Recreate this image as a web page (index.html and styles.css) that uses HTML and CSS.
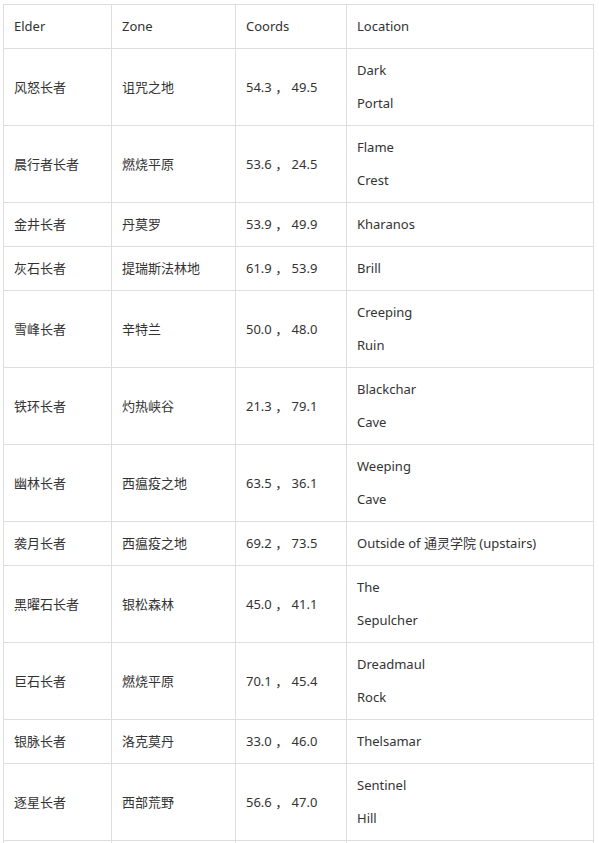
FILE: index.html
```html
<!DOCTYPE html>
<html>
<head>
<meta charset="utf-8">
<link rel="stylesheet" href="styles.css">
</head>
<body>
<table class="elders">
<colgroup>
<col class="c1"><col class="c2"><col class="c3"><col class="c4">
</colgroup>
<thead>
<tr><td>Elder</td><td>Zone</td><td>Coords</td><td>Location</td></tr>
</thead>
<tbody>
<tr><td>风怒长者</td><td>诅咒之地</td><td>54.3 ， 49.5</td><td>Dark<br>Portal</td></tr>
<tr><td>晨行者长者</td><td>燃烧平原</td><td>53.6 ， 24.5</td><td>Flame<br>Crest</td></tr>
<tr><td>金井长者</td><td>丹莫罗</td><td>53.9 ， 49.9</td><td>Kharanos</td></tr>
<tr><td>灰石长者</td><td>提瑞斯法林地</td><td>61.9 ， 53.9</td><td>Brill</td></tr>
<tr><td>雪峰长者</td><td>辛特兰</td><td>50.0 ， 48.0</td><td>Creeping<br>Ruin</td></tr>
<tr><td>铁环长者</td><td>灼热峡谷</td><td>21.3 ， 79.1</td><td>Blackchar<br>Cave</td></tr>
<tr><td>幽林长者</td><td>西瘟疫之地</td><td>63.5 ， 36.1</td><td>Weeping<br>Cave</td></tr>
<tr><td>袭月长者</td><td>西瘟疫之地</td><td>69.2 ， 73.5</td><td>Outside of 通灵学院 (upstairs)</td></tr>
<tr><td>黑曜石长者</td><td>银松森林</td><td>45.0 ， 41.1</td><td>The<br>Sepulcher</td></tr>
<tr><td>巨石长者</td><td>燃烧平原</td><td>70.1 ， 45.4</td><td>Dreadmaul<br>Rock</td></tr>
<tr><td>银脉长者</td><td>洛克莫丹</td><td>33.0 ， 46.0</td><td>Thelsamar</td></tr>
<tr><td>逐星长者</td><td>西部荒野</td><td>56.6 ， 47.0</td><td>Sentinel<br>Hill</td></tr>
<tr><td>&nbsp;</td><td>&nbsp;</td><td>&nbsp;</td><td>&nbsp;</td></tr>
</tbody>
</table>
</body>
</html>
```

FILE: styles.css
```css
html, body {
  margin: 0;
  padding: 0;
  background: #ffffff;
}
body {
  padding: 4px 0 0 3px;
  font-family: "Noto Sans", "Noto Sans CJK SC", sans-serif;
  font-size: 13px;
  color: #333333;
}
.elders {
  border-collapse: collapse;
  table-layout: fixed;
  width: 590px;
}
.c1 { width: 108px; }
.c2 { width: 124px; }
.c3 { width: 111px; }
.c4 { width: 247px; }
.elders td {
  border: 1px solid #dddddd;
  padding: 5px 10px;
  line-height: 33px;
  vertical-align: middle;
  text-align: left;
}
```
